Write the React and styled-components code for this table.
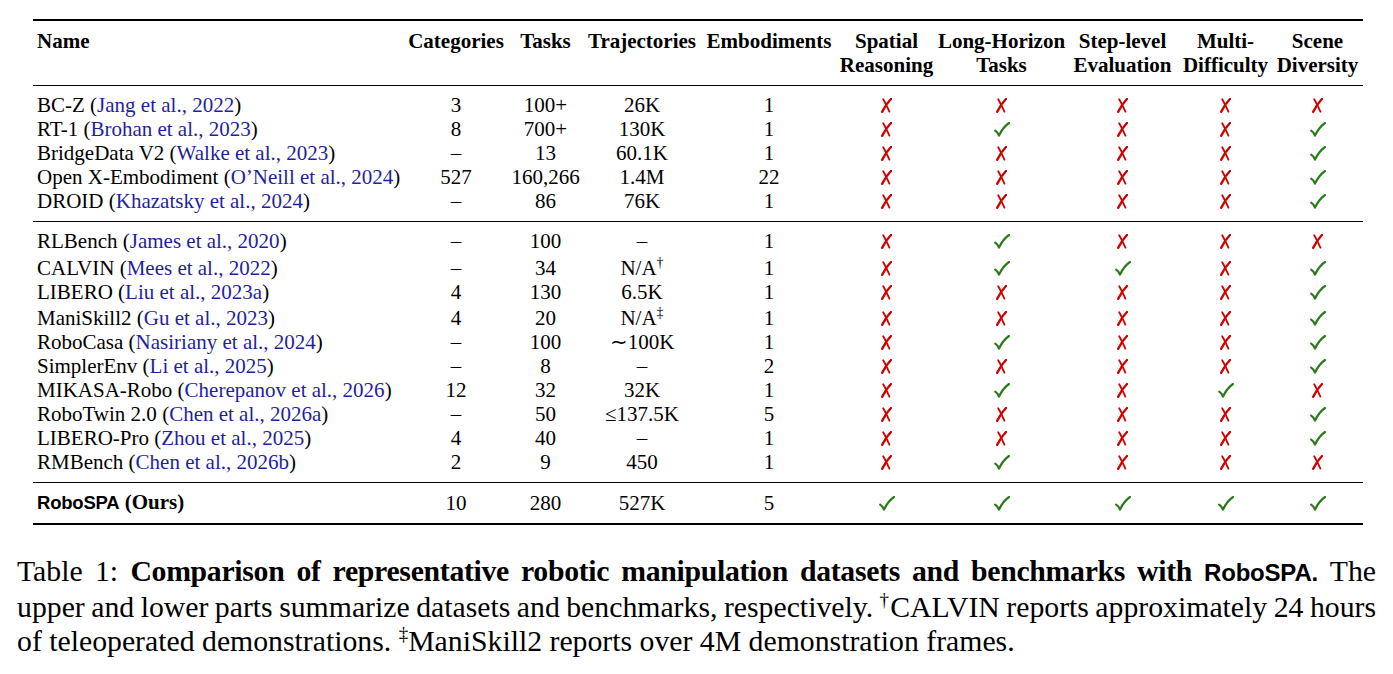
import React from "react";
import styled, { createGlobalStyle } from "styled-components";

const GlobalStyle = createGlobalStyle`
	html, body {
		margin: 0;
		padding: 0;
		background: #ffffff;
	}
	body {
		font-family: "Liberation Serif", "Times New Roman", serif;
		color: #000000;
	}
`;

const Page = styled.div`
	width: 1393px;
	padding: 19px 0 0 0;
	box-sizing: border-box;
`;

const TableWrap = styled.div`
	padding-left: 33px;
`;

const Table = styled.table`
	border-collapse: collapse;
	table-layout: fixed;
	width: 1330px;
	font-size: 21px;
	line-height: 24px;
`;

const Head = styled.thead`
	border-top: 2px solid #000;
	border-bottom: 1px solid #000;
	th {
		padding-top: 8px;
		padding-bottom: 8px;
	}
`;

const Body = styled.tbody`
	border-bottom: ${(p) => (p.$last ? "2px" : "1px")} solid #000;
	tr:first-child td {
		padding-top: 7px;
	}
	tr:last-child td {
		padding-bottom: 8px;
	}
`;

const HeadCell = styled.th`
	font-weight: bold;
	vertical-align: top;
	text-align: ${(p) => (p.$left ? "left" : "center")};
	padding-left: ${(p) => (p.$left ? "4px" : "0")};
	padding-right: 0;
	white-space: nowrap;
`;

const Cell = styled.td`
	text-align: ${(p) => (p.$left ? "left" : "center")};
	padding: ${(p) => p.$extra || 0}px 0 0 ${(p) => (p.$left ? "4px" : "0")};
	white-space: nowrap;
	vertical-align: bottom;
`;

const Cite = styled.span`
	color: #1f1f9f;
`;

const Sup = styled.sup`
	font-size: 14px;
	vertical-align: 8px;
	line-height: 0;
`;

const SansName = styled.span`
	font-family: "Liberation Sans", Arial, sans-serif;
	font-weight: bold;
	font-size: 18.5px;
	letter-spacing: -0.2px;
`;

const MarkIcon = styled.svg`
	display: inline-block;
	vertical-align: -1px;
`;

const Caption = styled.p`
	margin: 29px 0 0 17px;
	width: 1359px;
	font-size: 29.75px;
	line-height: 34px;
`;

const CaptionLine = styled.span`
	display: block;
	text-align: justify;
	text-align-last: ${(p) => (p.$end ? "left" : "justify")};
	word-spacing: ${(p) => (p.$tight ? "-2px" : "0")};
`;

const CapBold = styled.b`
	letter-spacing: -0.3px;
`;

const CapSup = styled.sup`
	font-size: 19px;
	vertical-align: 11px;
	line-height: 0;
`;

const CapSans = styled.span`
	font-family: "Liberation Sans", Arial, sans-serif;
	font-weight: bold;
	font-size: 24px;
	letter-spacing: -0.2px;
`;

function Cross() {
	return (
		<MarkIcon width="11" height="15" viewBox="0 0 11 15">
			<path d="M2.2 1.2 C4.2 4.6 6.4 9.2 8.4 13.6" stroke="#d00000" strokeWidth="1.8" fill="none" strokeLinecap="round" />
			<path d="M10 1 C6.8 4.2 3.6 8.6 1.2 13.8" stroke="#d00000" strokeWidth="2.4" fill="none" strokeLinecap="round" />
		</MarkIcon>
	);
}

function Check() {
	return (
		<MarkIcon width="16" height="15" viewBox="0 0 16 15">
			<path d="M1.2 8.6 C2.6 9.4 4 11 5 13.6 C7.4 8.4 10.6 4 15 1" stroke="#2c7a1c" strokeWidth="2.2" fill="none" strokeLinecap="round" strokeLinejoin="round" />
		</MarkIcon>
	);
}

const cols = [370, 106, 73, 120, 134, 101, 129, 113, 93, 91];

const upper = [
	["BC-Z", "Jang et al., 2022", "3", "100+", "26K", "1", "xxxxx"],
	["RT-1", "Brohan et al., 2023", "8", "700+", "130K", "1", "xvxxv"],
	["BridgeData V2", "Walke et al., 2023", "–", "13", "60.1K", "1", "xxxxv"],
	["Open X-Embodiment", "O’Neill et al., 2024", "527", "160,266", "1.4M", "22", "xxxxv"],
	["DROID", "Khazatsky et al., 2024", "–", "86", "76K", "1", "xxxxv"],
];

const lower = [
	["RLBench", "James et al., 2020", "–", "100", "–", "1", "xvxxx"],
	["CALVIN", "Mees et al., 2022", "–", "34", { t: "N/A", s: "†", extra: 3 }, "1", "xvvxv"],
	["LIBERO", "Liu et al., 2023a", "4", "130", "6.5K", "1", "xxxxv"],
	["ManiSkill2", "Gu et al., 2023", "4", "20", { t: "N/A", s: "‡", extra: 2 }, "1", "xxxxv"],
	["RoboCasa", "Nasiriany et al., 2024", "–", "100", "∼100K", "1", "xvxxv"],
	["SimplerEnv", "Li et al., 2025", "–", "8", "–", "2", "xxxxv"],
	["MIKASA-Robo", "Cherepanov et al., 2026", "12", "32", "32K", "1", "xvxvx"],
	["RoboTwin 2.0", "Chen et al., 2026a", "–", "50", "≤137.5K", "5", "xxxxv"],
	["LIBERO-Pro", "Zhou et al., 2025", "4", "40", "–", "1", "xxxxv"],
	["RMBench", "Chen et al., 2026b", "2", "9", "450", "1", "xvxxx"],
];

function Row({ row }) {
	const [name, cite, cat, tasks, traj, emb, marks] = row;
	const extra = typeof traj === "string" ? 0 : traj.extra;
	return (
		<tr>
			<Cell $left $extra={extra}>
				{name} (<Cite>{cite}</Cite>)
			</Cell>
			<Cell $extra={extra}>{cat}</Cell>
			<Cell $extra={extra}>{tasks}</Cell>
			<Cell $extra={extra}>
				{typeof traj === "string" ? (
					traj
				) : (
					<>
						{traj.t}
						<Sup>{traj.s}</Sup>
					</>
				)}
			</Cell>
			<Cell $extra={extra}>{emb}</Cell>
			{marks.split("").map((m, i) => (
				<Cell key={i} $extra={extra}>
					{m === "v" ? <Check /> : <Cross />}
				</Cell>
			))}
		</tr>
	);
}

export default function App() {
	return (
		<>
			<GlobalStyle />
			<Page>
				<TableWrap>
					<Table>
						<colgroup>
							{cols.map((w, i) => (
								<col key={i} style={{ width: w }} />
							))}
						</colgroup>
						<Head>
							<tr>
								<HeadCell $left>Name</HeadCell>
								<HeadCell>Categories</HeadCell>
								<HeadCell>Tasks</HeadCell>
								<HeadCell>Trajectories</HeadCell>
								<HeadCell>Embodiments</HeadCell>
								<HeadCell>
									Spatial
									<br />
									Reasoning
								</HeadCell>
								<HeadCell>
									Long-Horizon
									<br />
									Tasks
								</HeadCell>
								<HeadCell>
									Step-level
									<br />
									Evaluation
								</HeadCell>
								<HeadCell>
									Multi-
									<br />
									Difficulty
								</HeadCell>
								<HeadCell>
									Scene
									<br />
									Diversity
								</HeadCell>
							</tr>
						</Head>
						<Body>
							{upper.map((r) => (
								<Row key={r[0]} row={r} />
							))}
						</Body>
						<Body>
							{lower.map((r) => (
								<Row key={r[0]} row={r} />
							))}
						</Body>
						<Body $last>
							<tr>
								<Cell $left>
									<SansName>RoboSPA</SansName> <b>(Ours)</b>
								</Cell>
								<Cell>10</Cell>
								<Cell>280</Cell>
								<Cell>527K</Cell>
								<Cell>5</Cell>
								{[0, 1, 2, 3, 4].map((i) => (
									<Cell key={i}>
										<Check />
									</Cell>
								))}
							</tr>
						</Body>
					</Table>
				</TableWrap>
				<Caption>
					<CaptionLine>
						Table 1: <CapBold>Comparison of representative robotic manipulation datasets and benchmarks with <CapSans>RoboSPA.</CapSans></CapBold> The
					</CaptionLine>
					<CaptionLine $tight>
						upper and lower parts summarize datasets and benchmarks, respectively. <CapSup>†</CapSup>CALVIN reports approximately 24 hours
					</CaptionLine>
					<CaptionLine $end>
						of teleoperated demonstrations. <CapSup>‡</CapSup>ManiSkill2 reports over 4M demonstration frames.
					</CaptionLine>
				</Caption>
			</Page>
		</>
	);
}
